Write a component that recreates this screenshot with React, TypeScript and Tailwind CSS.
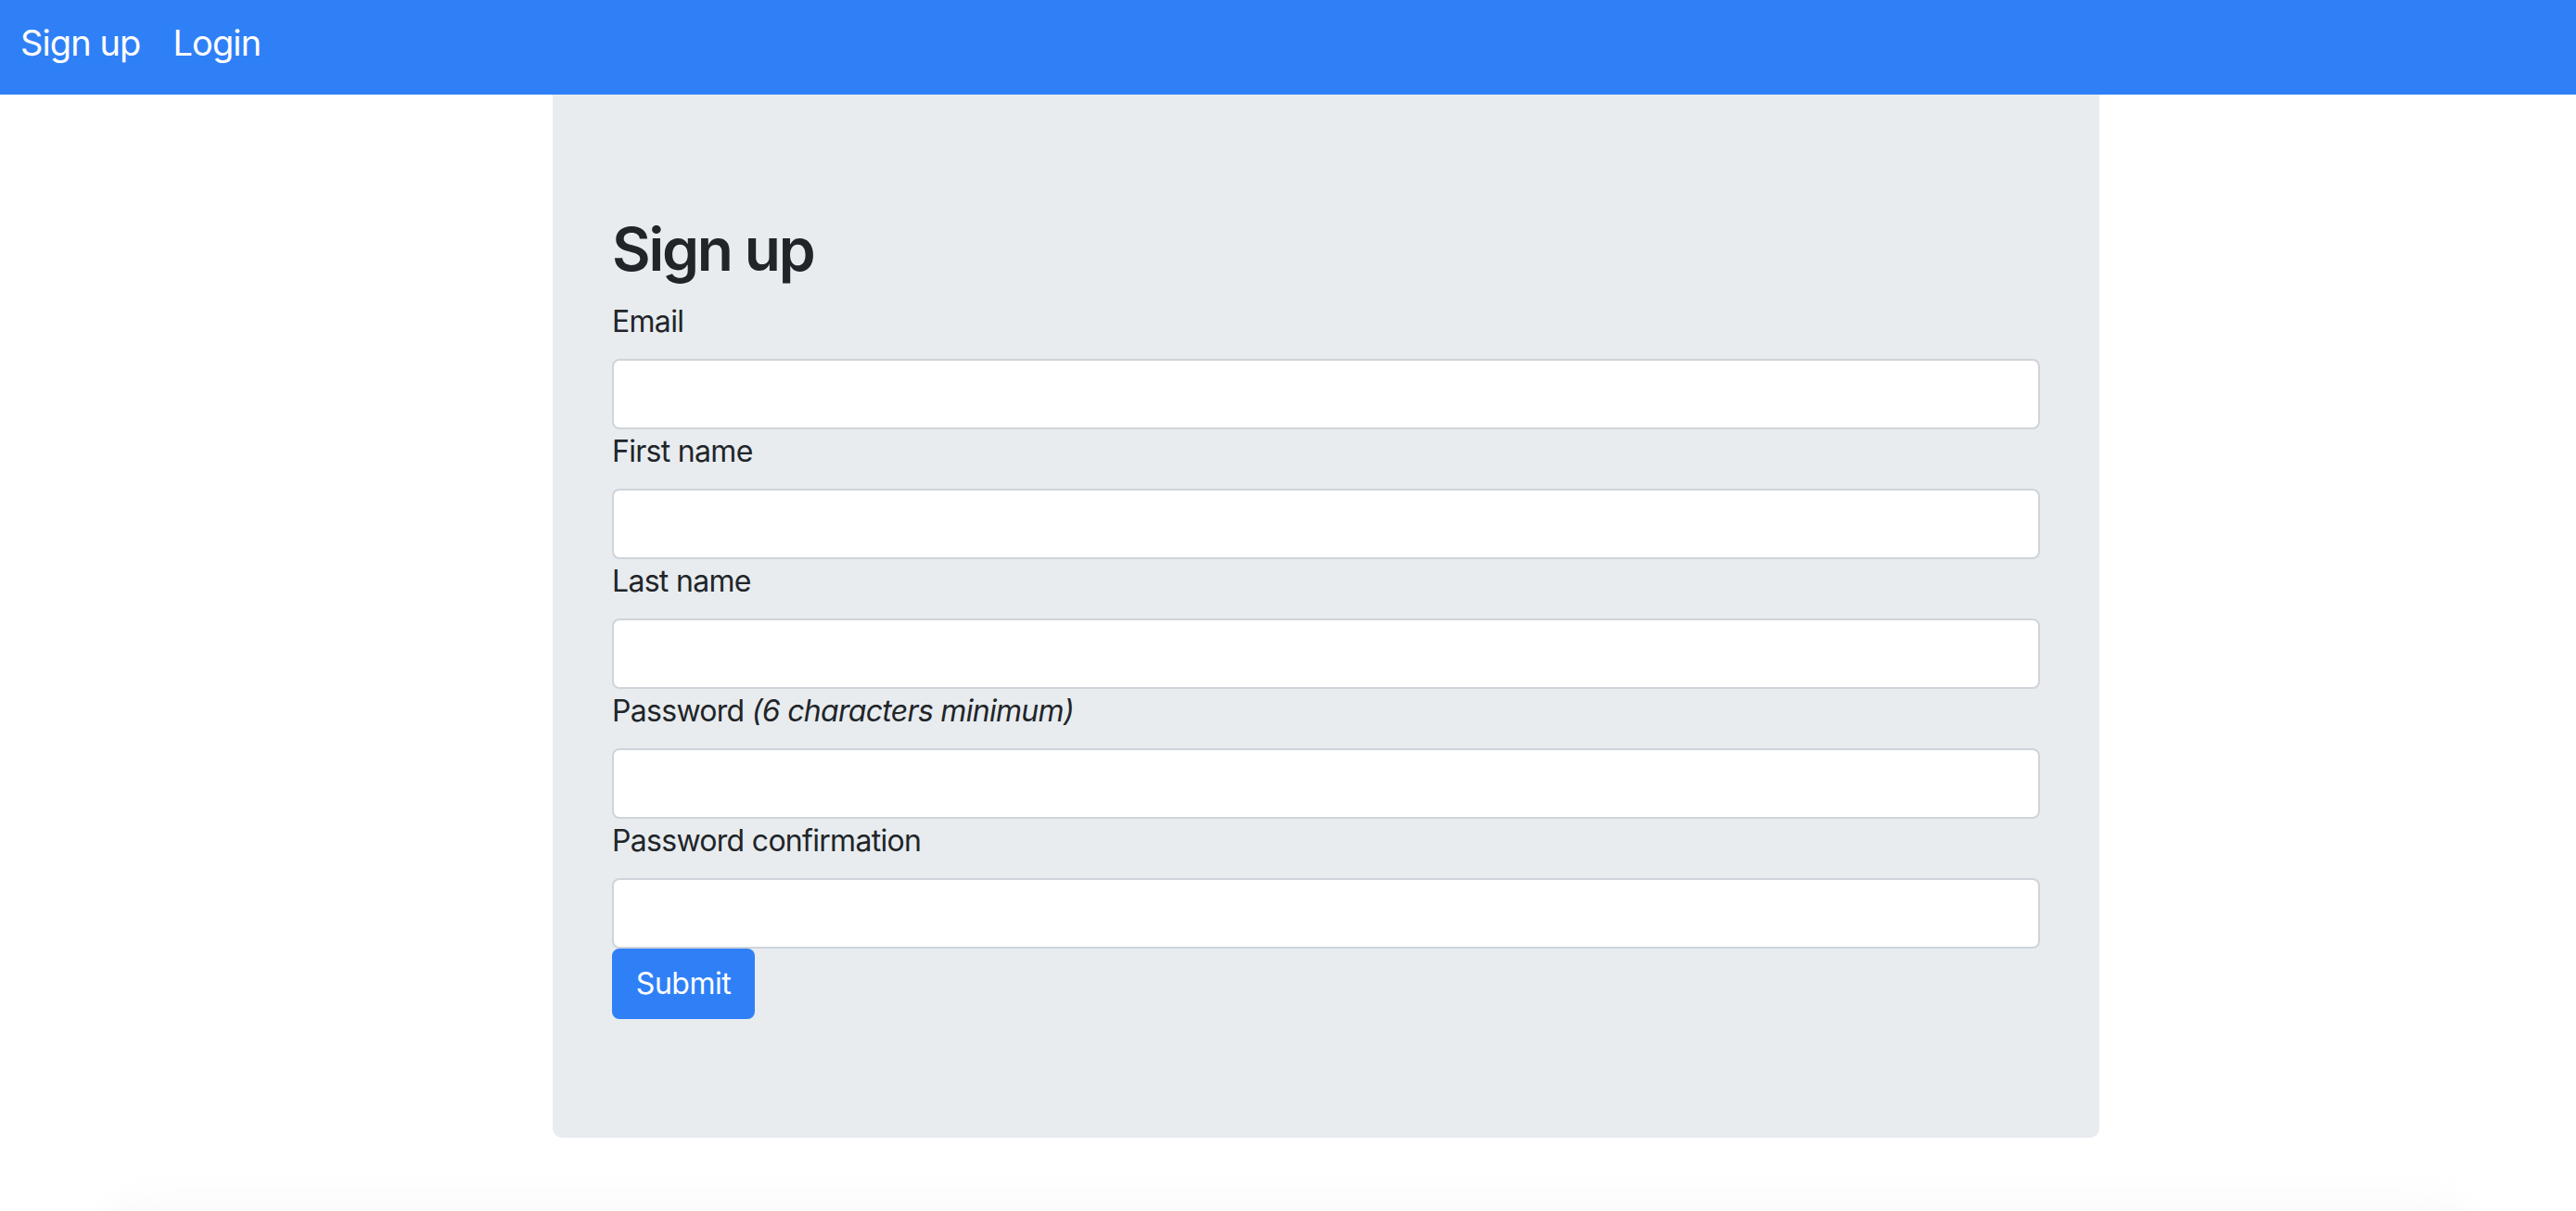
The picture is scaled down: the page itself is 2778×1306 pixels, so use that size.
import React from 'react';

const fields = [
  { id: 'email', label: 'Email', type: 'email' },
  { id: 'first_name', label: 'First name', type: 'text' },
  { id: 'last_name', label: 'Last name', type: 'text' },
  { id: 'password', label: 'Password', hint: '(6 characters minimum)', type: 'password' },
  { id: 'password_confirmation', label: 'Password confirmation', type: 'password' },
];

const Navbar = () => (
  <nav className="h-[102px] bg-[#2f80f7] flex items-start gap-[35px] pl-[22px] pt-[16px]">
    <a href="#" className="text-[38px] leading-[60px] tracking-[-0.9px] text-white">Sign up</a>
    <a href="#" className="text-[38px] leading-[60px] tracking-[-0.9px] text-white">Login</a>
  </nav>
);

const Field = ({ id, label, hint, type }: { id: string; label: string; hint?: string; type: string }) => (
  <div className="flex flex-col">
    <label htmlFor={id} className="text-[32px] leading-[48px] tracking-[-0.7px] mb-4 text-[#212529]">
      {label} {hint && <em>{hint}</em>}
    </label>
    <input
      id={id}
      type={type}
      className="h-[76px] w-full bg-white border-2 border-[#ced4da] rounded-[8px] px-6 text-[32px] outline-none"
    />
  </div>
);

export default function App() {
  return (
    <div className="min-h-screen bg-white font-['Inter',sans-serif] text-[#212529] overflow-hidden">
      <Navbar />
      <main className="ml-[596px] w-[1668px] bg-[#e8ecef] rounded-b-[10px] px-16 pt-32 pb-32">
        <h1 className="text-[64px] leading-[77px] font-semibold mb-4 tracking-[-2.2px]">Sign up</h1>
        <form className="flex flex-col" onSubmit={(e) => e.preventDefault()}>
          {fields.map((f) => (
            <Field key={f.id} {...f} />
          ))}
          <div>
            <button type="submit" className="h-[76px] w-[154px] bg-[#2f80f7] text-white text-[32px] tracking-[-0.5px] rounded-[8px]">
              Submit
            </button>
          </div>
        </form>
      </main>
      <div className="mt-[44px] mx-[110px] h-[60px] rounded-t-[120px] bg-gradient-to-b from-white to-[#f8f8f8] blur-md" />
    </div>
  );
}
